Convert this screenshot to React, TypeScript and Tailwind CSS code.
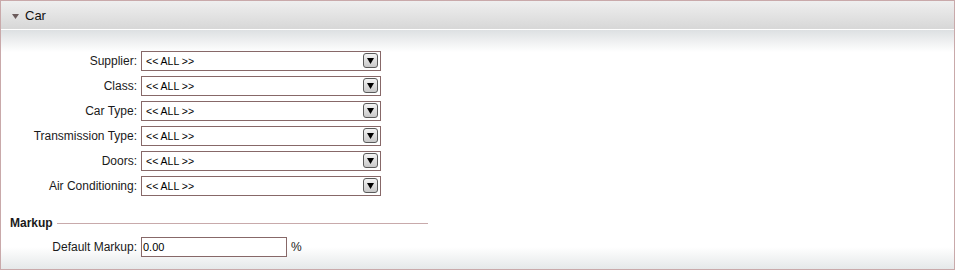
import React from "react";

const rows = ["Supplier:", "Class:", "Car Type:", "Transmission Type:", "Doors:", "Air Conditioning:"];

function SelectBox() {
  return (
    <div className="relative h-[20px] w-[240px] border border-[#876868] bg-white">
      <span className="absolute left-[4px] top-[3px] text-[10.5px] leading-[13px] text-black">&lt;&lt; ALL &gt;&gt;</span>
      <div className="absolute right-[2px] top-[1px] flex h-[15px] w-[15px] items-center justify-center rounded-[3px] border border-[#5a5a5a] bg-gradient-to-b from-[#f4f4f4] to-[#c8c8c8]">
        <svg width="7" height="6" viewBox="0 0 7 6">
          <path d="M0 0 L7 0 L3.5 6 Z" fill="#000" />
        </svg>
      </div>
    </div>
  );
}

export default function App() {
  return (
    <div className="h-[270px] w-[955px] bg-white" style={{ fontFamily: '"Liberation Sans", Arial, sans-serif' }}>
      <div className="flex h-[270px] flex-col border border-[#c9a9aa] text-[#1a1a1a]">
        <div className="flex h-[28px] items-center gap-[6px] bg-gradient-to-b from-[#efefef] to-[#d7d7d7] pl-[11px] pt-[2px]">
          <svg width="7" height="5" viewBox="0 0 7 5">
            <path d="M0 0 L7 0 L3.5 5 Z" fill="#6b5b5b" />
          </svg>
          <span className="text-[13px] text-[#111]">Car</span>
        </div>
        <div className="h-[1px] bg-white" />
        <div className="flex flex-1 flex-col bg-[linear-gradient(to_bottom,#dde0e2_0px,#ffffff_22px,#ffffff_calc(100%-22px),#e5e8e9_100%)]">
          <div className="flex flex-col gap-[5px] pt-[21px]">
            {rows.map((r) => (
              <div key={r} className="flex items-center gap-[4px]">
                <div className="w-[136px] text-right text-[12px] leading-[20px]">{r}</div>
                <SelectBox />
              </div>
            ))}
          </div>
          <div className="mt-[20px] flex w-[427px] items-center gap-[4px] pl-[9px]">
            <span className="text-[12px] font-bold leading-[14px]">Markup</span>
            <div className="h-[1px] flex-1 bg-[#c8aaab]" />
          </div>
          <div className="mt-[7px] flex items-center gap-[4px]">
            <div className="w-[136px] text-right text-[12px] leading-[20px]">Default Markup:</div>
            <div className="h-[20px] w-[146px] border border-[#876868] bg-white pl-[1px] pt-[3px] text-[11px] leading-[13px] text-black">0.00</div>
            <span className="text-[12px]">%</span>
          </div>
        </div>
      </div>
    </div>
  );
}
